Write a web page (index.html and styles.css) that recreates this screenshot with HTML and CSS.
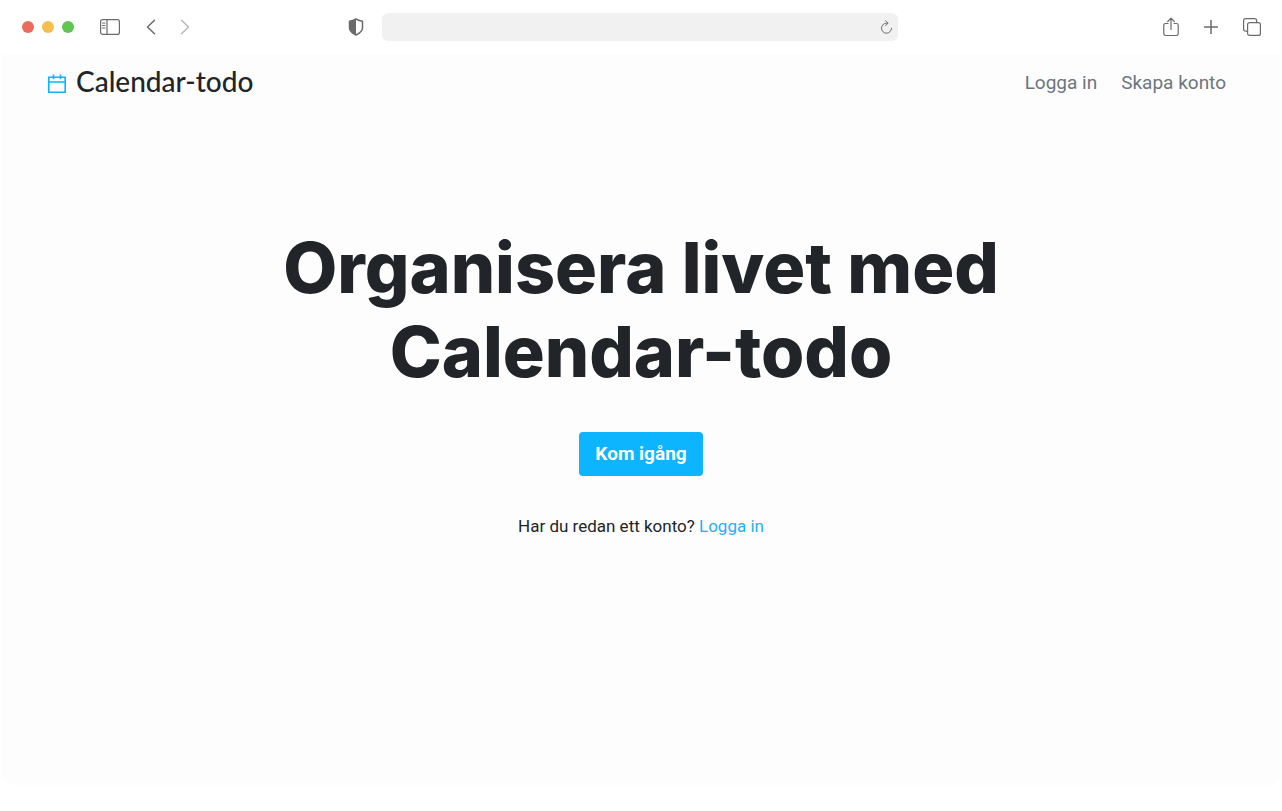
FILE: index.html
```html
<!DOCTYPE html>
<html lang="sv">
<head>
<meta charset="utf-8">
<meta name="viewport" content="width=device-width, initial-scale=1">
<title>Calendar-todo</title>
<link rel="stylesheet" href="styles.css">
</head>
<body>
<div class="browser">
  <div class="toolbar">
    <div class="toolbar-left">
      <div class="lights">
        <span class="light light-close"></span>
        <span class="light light-minimize"></span>
        <span class="light light-zoom"></span>
      </div>
      <button class="tool" type="button" aria-label="Sidofält">
        <svg width="20" height="16" viewBox="0 0 20 16"><rect x=".6" y=".6" width="18.8" height="14.8" rx="2"/><path d="M7 .6v14.8M2.500 4h2.500M2.500 6.500h2.500M2.500 9h2.500"/></svg>
      </button>
      <div class="history">
        <button class="tool" type="button" aria-label="Bakåt">
          <svg width="10" height="16" viewBox="0 0 10 16"><path class="chevron" d="M8.500 1.200 1.500 8l7 6.800"/></svg>
        </button>
        <button class="tool tool-muted" type="button" aria-label="Framåt">
          <svg width="10" height="16" viewBox="0 0 10 16"><path class="chevron" d="m1.500 1.200 7 6.800-7 6.800"/></svg>
        </button>
      </div>
    </div>
    <div class="toolbar-center">
      <button class="tool" type="button" aria-label="Integritet">
        <svg width="16" height="18" viewBox="0 0 16 18"><path class="shield" d="M8 1C6 2.200 3.500 3 1.500 3.200V10c0 3.200 3.500 5.500 6.500 7 3-1.500 6.500-3.800 6.500-7V3.200C12.500 3 10 2.200 8 1Z"/><path class="fill" d="M8 1C6 2.200 3.500 3 1.500 3.200V10c0 3.200 3.500 5.500 6.500 7Z"/></svg>
      </button>
      <div class="address">
        <input class="address-input" type="text" aria-label="Adress">
        <button class="tool" type="button" aria-label="Ladda om">
          <svg width="13" height="14" viewBox="0 0 13 14"><path class="thin" d="M7.800 3.200H6.500A5 5 0 1 0 11.500 8.200M5.500 .8l2.600 2.400-2.600 2.400"/></svg>
        </button>
      </div>
    </div>
    <div class="toolbar-right">
      <button class="tool" type="button" aria-label="Dela">
        <svg width="16" height="20" viewBox="0 0 16 20"><path d="M5 6.500H2.500Q.8 6.500 .8 8.200v8.600q0 1.700 1.700 1.700h11q1.700 0 1.700-1.700V8.200q0-1.700-1.700-1.700H11M8 12.500V1.300M4.700 4.500 8 1.200l3.300 3.300"/></svg>
      </button>
      <button class="tool" type="button" aria-label="Ny flik">
        <svg width="14" height="14" viewBox="0 0 14 14"><path class="plus" d="M7 .5v13M.5 7h13"/></svg>
      </button>
      <button class="tool" type="button" aria-label="Flikar">
        <svg width="18" height="18" viewBox="0 0 18 18"><path d="M4.600 13.200H2.600q-2 0-2-2V2.600q0-2 2-2h9q2 0 2 2v2"/><rect x="4.600" y="4.600" width="12.800" height="12.800" rx="2"/></svg>
      </button>
    </div>
  </div>
  <div class="page">
    <header class="site-header">
      <a class="brand" href="#">
        <svg class="brand-icon" width="18" height="19" viewBox="0 0 18 19"><path d="M.8 3.300h16.400v14.900H.8zM.8 8h16.400M5.500 .5v4.800M12.500 .5v4.800"/></svg>
        <span class="brand-name">Calendar-todo</span>
      </a>
      <nav class="site-nav">
        <a href="#">Logga in</a>
        <a href="#">Skapa konto</a>
      </nav>
    </header>
    <main class="hero">
      <h1 class="hero-title">Organisera livet med Calendar-todo</h1>
      <button class="cta" type="button">Kom igång</button>
      <p class="login-hint">Har du redan ett konto? <a href="#">Logga in</a></p>
    </main>
  </div>
</div>
</body>
</html>
```
FILE: styles.css
```css
* {
  box-sizing: border-box;
}

body {
  margin: 0;
  background: #fff;
  color: #212529;
  font-family: Roboto, "Liberation Sans", sans-serif;
}

a {
  text-decoration: none;
}

.browser {
  display: flex;
  flex-direction: column;
  min-height: 100vh;
  padding: 0 2px 26px;
}

.toolbar {
  display: grid;
  grid-template-columns: 9fr 550px 10fr;
  align-items: center;
  height: 54px;
  padding: 0 19px 0 20px;
}

.toolbar-left,
.toolbar-center,
.toolbar-right,
.history,
.lights {
  display: flex;
  align-items: center;
}

.toolbar-left {
  gap: 26px;
}

.lights {
  gap: 8px;
}

.light {
  width: 12px;
  height: 12px;
  border-radius: 50%;
}

.light-close {
  background: #ed6a5e;
}

.light-minimize {
  background: #f5bf4f;
}

.light-zoom {
  background: #61c554;
}

.history {
  gap: 24px;
}

.toolbar-center {
  gap: 18px;
}

.toolbar-right {
  justify-content: flex-end;
  gap: 25px;
}

.tool {
  display: flex;
  padding: 0;
  border: 0;
  background: none;
  color: #6b6b6b;
}

.tool svg {
  fill: none;
  stroke: currentColor;
  stroke-width: 1.2;
  stroke-linecap: round;
  stroke-linejoin: round;
}

.tool-muted {
  color: #b8b8b8;
}

.tool .chevron,
.tool .plus,
.tool .shield {
  stroke-width: 1.5;
}

.tool .thin {
  stroke-width: 1;
}

.tool .fill {
  fill: currentColor;
  stroke: none;
}

.address {
  display: flex;
  flex: 1;
  align-items: center;
  height: 28px;
  padding: 0 5px 0 12px;
  border-radius: 6px;
  background: #f1f1f1;
}

.address-input {
  flex: 1;
  min-width: 0;
  border: 0;
  outline: 0;
  background: none;
  font: inherit;
}

.page {
  flex: 1;
  border-radius: 0 0 10px 10px;
  background: #fdfdfd;
}

.site-header {
  display: flex;
  align-items: center;
  justify-content: space-between;
  height: 58px;
  padding: 0 54px 0 46px;
}

.brand {
  display: flex;
  align-items: center;
  gap: 10px;
  color: #212529;
  font-family: Lato, "Open Sans", sans-serif;
  font-size: 28px;
  font-weight: 500;
  line-height: 32px;
}

.brand-name {
  padding-bottom: 4px;
}

.brand-icon {
  fill: none;
  stroke: #0db4ff;
  stroke-width: 1.6;
}

.site-nav {
  display: flex;
  gap: 24px;
}

.site-nav a {
  color: #6c757d;
  font-size: 19px;
  line-height: 24px;
}

.hero {
  display: flex;
  flex-direction: column;
  align-items: center;
  padding: 114px 24px 24px;
  text-align: center;
}

.hero-title {
  max-width: 800px;
  margin: 0 0 38px;
  font-family: Inter, Roboto, sans-serif;
  font-size: 70px;
  font-weight: 800;
  line-height: 84px;
}

.cta {
  padding: 10px 16px;
  border: 0;
  border-radius: 4px;
  background: #0db4ff;
  color: #fff;
  font-family: inherit;
  font-size: 19px;
  font-weight: 700;
  line-height: 24px;
}

.login-hint {
  margin: 38px 0 0;
  font-size: 17px;
  line-height: 24px;
}

.login-hint a {
  color: #1fb0f5;
}
```
